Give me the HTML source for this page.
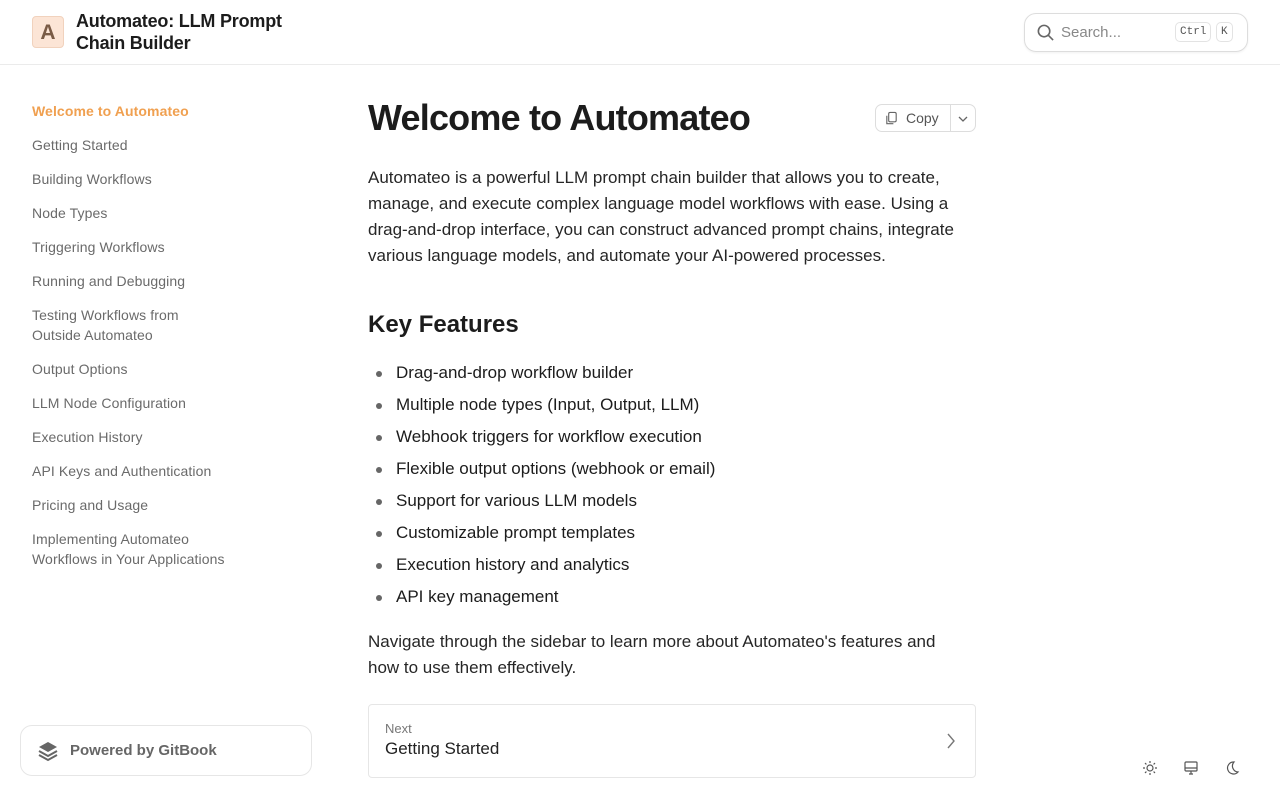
<!DOCTYPE html>
<html><head><meta charset="utf-8"><style>
*{box-sizing:border-box;margin:0;padding:0}
body{width:1280px;height:800px;overflow:hidden;background:#fff;font-family:"Liberation Sans",sans-serif;color:#1c1c1c;position:relative}
.hdr{position:absolute;left:0;top:0;width:1280px;height:65px;border-bottom:1px solid #ebebeb}
.logo{position:absolute;left:32px;top:16px;width:32px;height:32px;border-radius:4px;background:#fce5d6;border:1px solid #f1d2bd;color:#7a5b45;font-weight:bold;font-size:21px;text-align:center;line-height:31px}
.title{position:absolute;left:76px;top:10px;font-size:18px;font-weight:bold;line-height:22px;color:#1c1c1c;letter-spacing:-0.2px}
.search{position:absolute;left:1024px;top:13px;width:224px;height:39px;border:1px solid #ddd;border-radius:12px;box-shadow:0 1px 2px rgba(0,0,0,.06)}
.search .t{position:absolute;left:36px;top:10px;font-size:15px;color:#888}
.kbd{position:absolute;top:8px;height:20px;border:1px solid #e3e3e3;border-radius:5px;font-family:"Liberation Mono",monospace;font-size:11px;color:#555;line-height:18px;padding:0 4px}
.nav{position:absolute;left:32px;top:101px;width:210px}
.nav div{font-size:14px;color:#6a6a6a;line-height:20px;margin-bottom:14px;letter-spacing:0.1px}
.nav div.a{color:#f0a050;font-weight:bold}
.main{position:absolute;left:368px;top:96px;width:608px}
h1{font-size:36px;font-weight:bold;line-height:44px;letter-spacing:-0.8px}
p{font-size:17px;line-height:26px;color:#262626}
h2{font-size:24px;font-weight:bold;margin-top:40px;line-height:32px}
ul{list-style:none;margin-top:16px}
li{font-size:17px;line-height:32px;padding-left:28px;position:relative}
li:before{content:"";position:absolute;left:8px;top:14px;width:6px;height:6px;border-radius:50%;background:#666}
.copy{position:absolute;left:507px;top:8px;width:101px;height:28px;border:1px solid #ddd;border-radius:7px;font-size:14px;color:#555}
.next{position:absolute;left:368px;top:704px;width:608px;height:74px;border:1px solid #e6e6e6;border-radius:4px}
.gb{position:absolute;left:20px;top:725px;width:292px;height:51px;border:1px solid #e6e6e6;border-radius:12px}
</style></head><body>
<div class="hdr">
<div class="logo">A</div>
<div class="title">Automateo: LLM Prompt<br>Chain Builder</div>
<div class="search">
<svg style="position:absolute;left:11px;top:9px" width="19" height="19" viewBox="0 0 20 20" fill="none" stroke="#666" stroke-width="1.7"><circle cx="8.5" cy="8.5" r="6"/><path d="M13 13l5 5"/></svg>
<span class="t">Search...</span>
<span class="kbd" style="left:150px">Ctrl</span><span class="kbd" style="left:191px">K</span>
</div>
</div>
<div class="nav">
<div class="a">Welcome to Automateo</div>
<div>Getting Started</div>
<div>Building Workflows</div>
<div>Node Types</div>
<div>Triggering Workflows</div>
<div>Running and Debugging</div>
<div>Testing Workflows from<br>Outside Automateo</div>
<div>Output Options</div>
<div>LLM Node Configuration</div>
<div>Execution History</div>
<div>API Keys and Authentication</div>
<div>Pricing and Usage</div>
<div>Implementing Automateo<br>Workflows in Your Applications</div>
</div>
<div class="main">
<h1>Welcome to Automateo</h1>
<div class="copy">
<svg style="position:absolute;left:8px;top:6px" width="15" height="15" viewBox="0 0 16 16" fill="none" stroke="#666" stroke-width="1.2"><rect x="5" y="1.5" width="8" height="10" rx="1.5"/><path d="M3 5v8.5h7"/></svg>
<span style="position:absolute;left:30px;top:5px">Copy</span>
<span style="position:absolute;left:74px;top:0;width:1px;height:26px;background:#ddd"></span>
<svg style="position:absolute;left:81px;top:9px" width="12" height="10" viewBox="0 0 12 10" fill="none" stroke="#666" stroke-width="1.3"><path d="M2 3l4 4 4-4"/></svg>
</div>
<p style="margin-top:25px">Automateo is a powerful LLM prompt chain builder that allows you to create, manage, and execute complex language model workflows with ease. Using a drag-and-drop interface, you can construct advanced prompt chains, integrate various language models, and automate your AI-powered processes.</p>
<h2>Key Features</h2>
<ul>
<li>Drag-and-drop workflow builder</li>
<li>Multiple node types (Input, Output, LLM)</li>
<li>Webhook triggers for workflow execution</li>
<li>Flexible output options (webhook or email)</li>
<li>Support for various LLM models</li>
<li>Customizable prompt templates</li>
<li>Execution history and analytics</li>
<li>API key management</li>
</ul>
<p style="margin-top:16px">Navigate through the sidebar to learn more about Automateo's features and<br>how to use them effectively.</p>
</div>
<div class="next">
<span style="position:absolute;left:16px;top:16px;font-size:13px;color:#777">Next</span>
<span style="position:absolute;left:16px;top:34px;font-size:17px;color:#222">Getting Started</span>
<svg style="position:absolute;left:576px;top:27px" width="12" height="18" viewBox="0 0 12 18" fill="none" stroke="#777" stroke-width="1.4"><path d="M3 2l6 7-6 7"/></svg>
</div>
<div class="gb">
<svg style="position:absolute;left:16px;top:14px" width="22" height="22" viewBox="0 0 22 22"><path d="M11 2l9 5-9 5-9-5z" fill="#666"/><path d="M2 11l9 5 9-5M2 15l9 5 9-5" fill="none" stroke="#666" stroke-width="2"/></svg>
<span style="position:absolute;left:49px;top:16px;font-size:15px;font-weight:bold;color:#666">Powered by GitBook</span>
</div>
<svg style="position:absolute;left:1142px;top:760px" width="16" height="16" viewBox="0 0 16 16" fill="none" stroke="#555" stroke-width="1.2"><circle cx="8" cy="8" r="3"/><path d="M8 1v2M8 13v2M1 8h2M13 8h2M3 3l1.4 1.4M11.6 11.6L13 13M3 13l1.4-1.4M11.6 4.4L13 3"/></svg>
<svg style="position:absolute;left:1183px;top:760px" width="16" height="16" viewBox="0 0 16 16" fill="none" stroke="#555" stroke-width="1.2"><rect x="2" y="2" width="12" height="9" rx="1"/><path d="M2 8h12M6 14h4M8 11v3"/></svg>
<svg style="position:absolute;left:1224px;top:760px" width="16" height="16" viewBox="0 0 16 16" fill="none" stroke="#555" stroke-width="1.2"><path d="M10 2a6 6 0 1 0 4 10A6 6 0 0 1 10 2z"/></svg>
</body></html>
